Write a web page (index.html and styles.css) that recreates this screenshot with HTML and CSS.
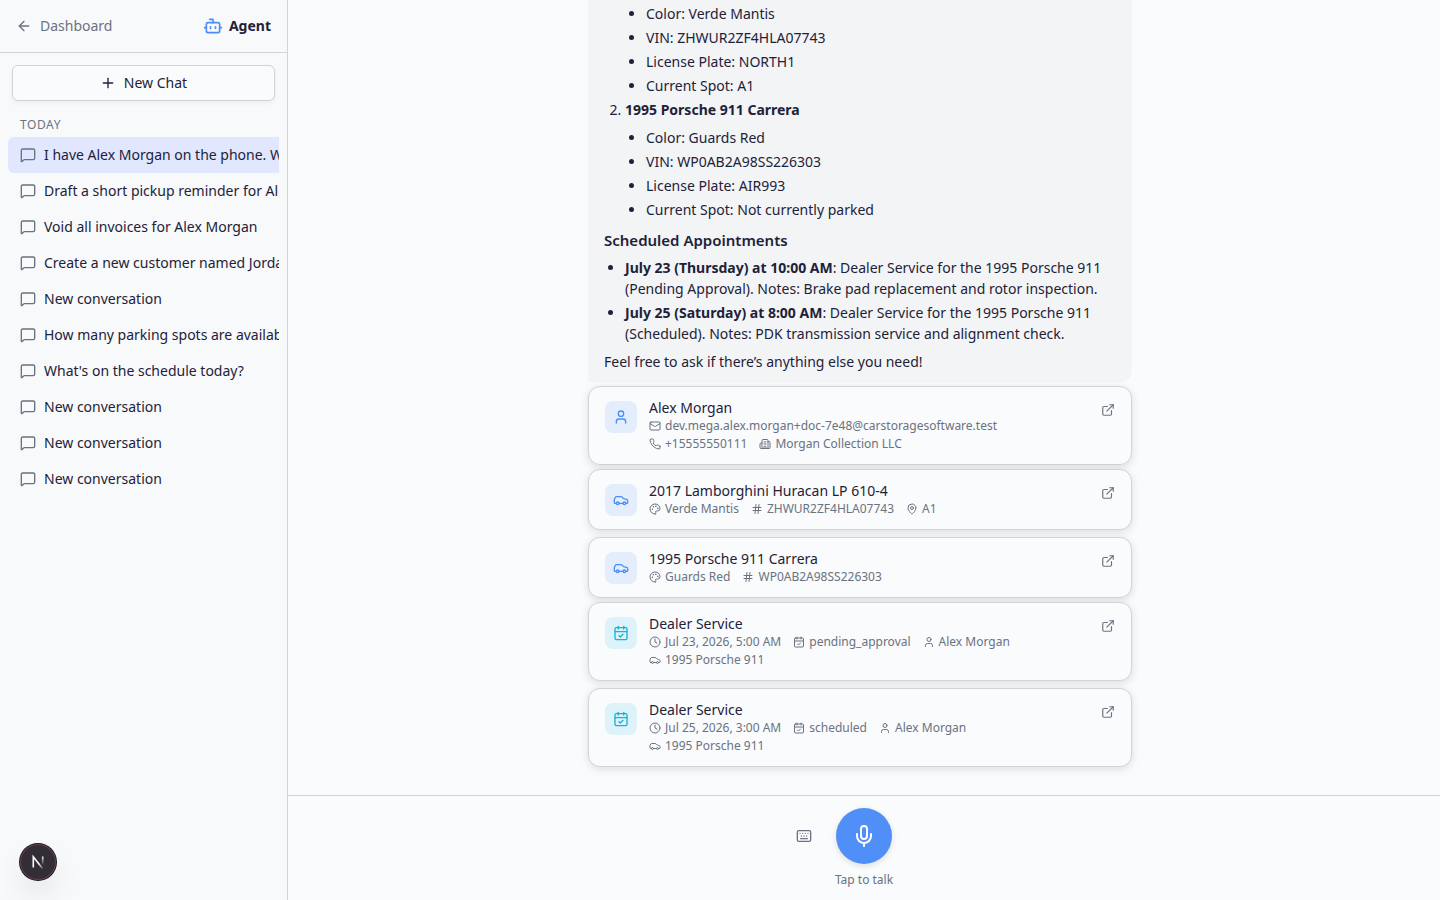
FILE: index.html
```html
<!DOCTYPE html>
<html lang="en">
<head>
    <meta charset="utf-8">
    <meta name="viewport" content="width=device-width, initial-scale=1">
    <title>Agent</title>
    <link rel="stylesheet" href="styles.css">
</head>
<body>
    <svg class="sprite" aria-hidden="true">
        <symbol id="arrow-left" viewBox="0 0 24 24"><path d="m12 19-7-7 7-7"/><path d="M19 12H5"/></symbol>
        <symbol id="bot" viewBox="0 0 24 24"><path d="M12 8V4H8"/><rect width="16" height="12" x="4" y="8" rx="2"/><path d="M2 14h2"/><path d="M20 14h2"/><path d="M15 13v2"/><path d="M9 13v2"/></symbol>
        <symbol id="plus" viewBox="0 0 24 24"><path d="M5 12h14"/><path d="M12 5v14"/></symbol>
        <symbol id="message" viewBox="0 0 24 24"><path d="M22 17a2 2 0 0 1-2 2H6.828a2 2 0 0 0-1.414.586l-2.202 2.202A.71.71 0 0 1 2 21.286V5a2 2 0 0 1 2-2h16a2 2 0 0 1 2 2z"/></symbol>
        <symbol id="user" viewBox="0 0 24 24"><path d="M19 21v-2a4 4 0 0 0-4-4H9a4 4 0 0 0-4 4v2"/><circle cx="12" cy="7" r="4"/></symbol>
        <symbol id="mail" viewBox="0 0 24 24"><path d="m22 7-8.991 5.727a2 2 0 0 1-2.009 0L2 7"/><rect x="2" y="4" width="20" height="16" rx="2"/></symbol>
        <symbol id="phone" viewBox="0 0 24 24"><path d="M22 16.92v3a2 2 0 0 1-2.18 2 19.79 19.79 0 0 1-8.63-3.07 19.5 19.5 0 0 1-6-6 19.79 19.79 0 0 1-3.07-8.67A2 2 0 0 1 4.11 2h3a2 2 0 0 1 2 1.72 12.84 12.84 0 0 0 .7 2.81 2 2 0 0 1-.45 2.11L8.09 9.91a16 16 0 0 0 6 6l1.27-1.27a2 2 0 0 1 2.11-.45 12.84 12.84 0 0 0 2.81.7A2 2 0 0 1 22 16.92z"/></symbol>
        <symbol id="building" viewBox="0 0 24 24"><path d="M10 12h4"/><path d="M10 8h4"/><path d="M14 21v-3a2 2 0 0 0-4 0v3"/><path d="M6 10H4a2 2 0 0 0-2 2v7a2 2 0 0 0 2 2h16a2 2 0 0 0 2-2V9a2 2 0 0 0-2-2h-2"/><path d="M6 21V5a2 2 0 0 1 2-2h8a2 2 0 0 1 2 2v16"/></symbol>
        <symbol id="car" viewBox="0 0 24 24"><path d="M19 17h2c.6 0 1-.4 1-1v-3c0-.9-.7-1.7-1.5-1.9C18.7 10.6 16 10 16 10s-1.3-1.4-2.2-2.3c-.5-.4-1.1-.7-1.8-.7H5c-.6 0-1.1.4-1.4.9l-1.4 2.9A3.7 3.7 0 0 0 2 12v4c0 .6.4 1 1 1h2"/><circle cx="7" cy="17" r="2"/><path d="M9 17h6"/><circle cx="17" cy="17" r="2"/></symbol>
        <symbol id="palette" viewBox="0 0 24 24"><path d="M12 22a1 1 0 0 1 0-20 10 9 0 0 1 10 9 5 5 0 0 1-5 5h-2.25a1.75 1.75 0 0 0-1.4 2.8l.3.4a1.75 1.75 0 0 1-1.4 2.8z"/><circle cx="13.5" cy="6.5" r=".5"/><circle cx="17.5" cy="10.5" r=".5"/><circle cx="6.5" cy="12.5" r=".5"/><circle cx="8.5" cy="7.5" r=".5"/></symbol>
        <symbol id="hash" viewBox="0 0 24 24"><path d="M4 9h16"/><path d="M4 15h16"/><path d="M10 3 8 21"/><path d="m16 3-2 18"/></symbol>
        <symbol id="map-pin" viewBox="0 0 24 24"><path d="M20 10c0 4.993-5.539 10.193-7.399 11.799a1 1 0 0 1-1.202 0C9.539 20.193 4 14.993 4 10a8 8 0 0 1 16 0"/><circle cx="12" cy="10" r="3"/></symbol>
        <symbol id="clock" viewBox="0 0 24 24"><circle cx="12" cy="12" r="10"/><path d="M12 6v6l4 2"/></symbol>
        <symbol id="calendar" viewBox="0 0 24 24"><path d="M8 2v4"/><path d="M16 2v4"/><rect width="18" height="18" x="3" y="4" rx="2"/><path d="M3 10h18"/><path d="m9 16 2 2 4-4"/></symbol>
        <symbol id="external" viewBox="0 0 24 24"><path d="M15 3h6v6"/><path d="M10 14 21 3"/><path d="M18 13v6a2 2 0 0 1-2 2H5a2 2 0 0 1-2-2V8a2 2 0 0 1 2-2h6"/></symbol>
        <symbol id="keyboard" viewBox="0 0 24 24"><path d="M10 8h.01"/><path d="M12 12h.01"/><path d="M14 8h.01"/><path d="M16 12h.01"/><path d="M18 8h.01"/><path d="M6 8h.01"/><path d="M7 16h10"/><path d="M8 12h.01"/><rect width="20" height="16" x="2" y="4" rx="2"/></symbol>
        <symbol id="mic" viewBox="0 0 24 24"><path d="M12 19v3"/><path d="M19 10v2a7 7 0 0 1-14 0v-2"/><rect x="9" y="2" width="6" height="13" rx="3"/></symbol>
    </svg>

    <div class="app">
        <aside class="sidebar">
            <header class="sidebar-header">
                <a class="back" href="#"><svg class="icon"><use href="#arrow-left"/></svg>Dashboard</a>
                <span class="brand"><svg class="icon icon-lg"><use href="#bot"/></svg>Agent</span>
            </header>
            <button class="new-chat" type="button"><svg class="icon"><use href="#plus"/></svg>New Chat</button>
            <nav class="history">
                <h2>TODAY</h2>
                <a class="chat active" href="#"><svg class="icon"><use href="#message"/></svg>I have Alex Morgan on the phone. What</a>
                <a class="chat" href="#"><svg class="icon"><use href="#message"/></svg>Draft a short pickup reminder for Alex</a>
                <a class="chat" href="#"><svg class="icon"><use href="#message"/></svg>Void all invoices for Alex Morgan</a>
                <a class="chat" href="#"><svg class="icon"><use href="#message"/></svg>Create a new customer named Jordan</a>
                <a class="chat" href="#"><svg class="icon"><use href="#message"/></svg>New conversation</a>
                <a class="chat" href="#"><svg class="icon"><use href="#message"/></svg>How many parking spots are available</a>
                <a class="chat" href="#"><svg class="icon"><use href="#message"/></svg>What's on the schedule today?</a>
                <a class="chat" href="#"><svg class="icon"><use href="#message"/></svg>New conversation</a>
                <a class="chat" href="#"><svg class="icon"><use href="#message"/></svg>New conversation</a>
                <a class="chat" href="#"><svg class="icon"><use href="#message"/></svg>New conversation</a>
            </nav>
        </aside>

        <main class="main">
            <section class="messages">
                <div class="thread">
                    <div class="bubble">
                        <ol>
                            <li><strong>2017 Lamborghini Huracan LP 610-4</strong>
                                <ul>
                                    <li>Color: Verde Mantis</li>
                                    <li>VIN: ZHWUR2ZF4HLA07743</li>
                                    <li>License Plate: NORTH1</li>
                                    <li>Current Spot: A1</li>
                                </ul>
                            </li>
                            <li><strong>1995 Porsche 911 Carrera</strong>
                                <ul>
                                    <li>Color: Guards Red</li>
                                    <li>VIN: WP0AB2A98SS226303</li>
                                    <li>License Plate: AIR993</li>
                                    <li>Current Spot: Not currently parked</li>
                                </ul>
                            </li>
                        </ol>
                        <h3>Scheduled Appointments</h3>
                        <ul>
                            <li><strong>July 23 (Thursday) at 10:00 AM</strong>: Dealer Service for the 1995 Porsche 911 (Pending Approval). Notes: Brake pad replacement and rotor inspection.</li>
                            <li><strong>July 25 (Saturday) at 8:00 AM</strong>: Dealer Service for the 1995 Porsche 911 (Scheduled). Notes: PDK transmission service and alignment check.</li>
                        </ul>
                        <p>Feel free to ask if there’s anything else you need!</p>
                    </div>

                    <div class="cards">
                        <a class="card" href="#">
                            <span class="tile"><svg class="icon"><use href="#user"/></svg></span>
                            <div class="info">
                                <h4>Alex Morgan</h4>
                                <div class="meta">
                                    <span><svg class="icon"><use href="#mail"/></svg>dev.mega.alex.morgan+doc-7e48@carstoragesoftware.test</span>
                                    <span><svg class="icon"><use href="#phone"/></svg>+15555550111</span>
                                    <span><svg class="icon"><use href="#building"/></svg>Morgan Collection LLC</span>
                                </div>
                            </div>
                            <svg class="icon open"><use href="#external"/></svg>
                        </a>
                    </div>

                    <div class="cards">
                        <a class="card" href="#">
                            <span class="tile"><svg class="icon"><use href="#car"/></svg></span>
                            <div class="info">
                                <h4>2017 Lamborghini Huracan LP 610-4</h4>
                                <div class="meta">
                                    <span><svg class="icon"><use href="#palette"/></svg>Verde Mantis</span>
                                    <span><svg class="icon"><use href="#hash"/></svg>ZHWUR2ZF4HLA07743</span>
                                    <span><svg class="icon"><use href="#map-pin"/></svg>A1</span>
                                </div>
                            </div>
                            <svg class="icon open"><use href="#external"/></svg>
                        </a>
                        <a class="card" href="#">
                            <span class="tile"><svg class="icon"><use href="#car"/></svg></span>
                            <div class="info">
                                <h4>1995 Porsche 911 Carrera</h4>
                                <div class="meta">
                                    <span><svg class="icon"><use href="#palette"/></svg>Guards Red</span>
                                    <span><svg class="icon"><use href="#hash"/></svg>WP0AB2A98SS226303</span>
                                </div>
                            </div>
                            <svg class="icon open"><use href="#external"/></svg>
                        </a>
                    </div>

                    <div class="cards">
                        <a class="card" href="#">
                            <span class="tile tile-service"><svg class="icon"><use href="#calendar"/></svg></span>
                            <div class="info">
                                <h4>Dealer Service</h4>
                                <div class="meta">
                                    <span><svg class="icon"><use href="#clock"/></svg>Jul 23, 2026, 5:00 AM</span>
                                    <span><svg class="icon"><use href="#calendar"/></svg>pending_approval</span>
                                    <span><svg class="icon"><use href="#user"/></svg>Alex Morgan</span>
                                    <span><svg class="icon"><use href="#car"/></svg>1995 Porsche 911</span>
                                </div>
                            </div>
                            <svg class="icon open"><use href="#external"/></svg>
                        </a>
                        <a class="card" href="#">
                            <span class="tile tile-service"><svg class="icon"><use href="#calendar"/></svg></span>
                            <div class="info">
                                <h4>Dealer Service</h4>
                                <div class="meta">
                                    <span><svg class="icon"><use href="#clock"/></svg>Jul 25, 2026, 3:00 AM</span>
                                    <span><svg class="icon"><use href="#calendar"/></svg>scheduled</span>
                                    <span><svg class="icon"><use href="#user"/></svg>Alex Morgan</span>
                                    <span><svg class="icon"><use href="#car"/></svg>1995 Porsche 911</span>
                                </div>
                            </div>
                            <svg class="icon open"><use href="#external"/></svg>
                        </a>
                    </div>
                </div>
            </section>

            <footer class="talk">
                <div class="talk-row">
                    <button class="keyboard" type="button" aria-label="Keyboard"><svg class="icon"><use href="#keyboard"/></svg></button>
                    <button class="mic" id="mic-button" type="button" aria-labelledby="mic-label"><svg class="icon icon-xl"><use href="#mic"/></svg></button>
                </div>
                <label id="mic-label" for="mic-button">Tap to talk</label>
            </footer>
        </main>
    </div>

    <button class="dev-badge" type="button" aria-label="Dev tools">
        <svg viewBox="0 0 36 36" width="36" height="36" fill="none">
            <defs>
                <linearGradient id="fade-diagonal" x1="20" y1="19" x2="24" y2="25" gradientUnits="userSpaceOnUse"><stop stop-color="#fff"/><stop offset="1" stop-color="#fff" stop-opacity="0"/></linearGradient>
                <linearGradient id="fade-stem" x1="23" y1="12" x2="23" y2="21" gradientUnits="userSpaceOnUse"><stop stop-color="#fff"/><stop offset="1" stop-color="#fff" stop-opacity="0"/></linearGradient>
            </defs>
            <path d="M13.300 23.500V12.800L22.500 24.500" stroke="url(#fade-diagonal)" stroke-width="1.600"/>
            <path d="M22.700 12.500V22" stroke="url(#fade-stem)" stroke-width="1.600"/>
        </svg>
    </button>
</body>
</html>
```

FILE: styles.css
```css
*{
    box-sizing: border-box;
}
body{
    margin: 0;
    font-family: "Noto Sans", sans-serif;
    font-size: 14px;
    line-height: 20px;
    color: #1e2238;
    background: #f9fbfd;
}
h2, h3, h4, p, ol, ul{
    margin: 0;
}
a{
    color: inherit;
    text-decoration: none;
}
button{
    font: inherit;
    color: inherit;
    padding: 0;
    border: 0;
    background: none;
    cursor: pointer;
}
.sprite{
    position: absolute;
    width: 0;
    height: 0;
}
.icon{
    flex: none;
    width: 16px;
    height: 16px;
    fill: none;
    stroke: currentColor;
    stroke-width: 2;
    stroke-linecap: round;
    stroke-linejoin: round;
}
.icon-lg{
    width: 20px;
    height: 20px;
}
.icon-xl{
    width: 24px;
    height: 24px;
}
.app{
    display: flex;
    height: 100vh;
    overflow: hidden;
}

/* sidebar */
.sidebar{
    flex: none;
    display: flex;
    flex-direction: column;
    width: 288px;
    background: #f7f9fb;
    border-right: 1px solid #d1d3db;
}
.sidebar-header{
    display: flex;
    align-items: center;
    justify-content: space-between;
    padding: 16px;
    border-bottom: 1px solid #d1d3db;
}
.back{
    display: flex;
    align-items: center;
    gap: 8px;
    color: #6b7280;
}
.brand{
    display: flex;
    align-items: center;
    gap: 6px;
    font-weight: 700;
}
.brand .icon{
    color: #4b8ef8;
}
.new-chat{
    display: flex;
    align-items: center;
    justify-content: center;
    gap: 8px;
    height: 36px;
    margin: 12px;
    border: 1px solid #d1d3db;
    border-radius: 6px;
    background: #f9fbfd;
    box-shadow: 0 2px 4px rgba(0, 0, 0, 0.05);
}
.history{
    margin: 0 8px;
    overflow: hidden;
}
.history h2{
    padding: 4px 12px;
    font-size: 12px;
    line-height: 16px;
    font-weight: 400;
    letter-spacing: 0.05em;
    color: #6b7280;
}
.chat{
    display: flex;
    align-items: center;
    gap: 8px;
    width: max-content;
    min-width: 100%;
    padding: 8px 12px;
    border-radius: 6px;
    white-space: nowrap;
}
.chat .icon{
    color: #6b7280;
}
.chat.active{
    background: #e0e7ff;
}

/* conversation */
.main{
    flex: 1;
    display: flex;
    flex-direction: column;
    min-width: 0;
}
.messages{
    flex: 1;
    display: flex;
    flex-direction: column;
    justify-content: flex-end;
    min-height: 0;
    padding: 0 24px 28px 16px;
    overflow: hidden;
}
.thread{
    display: flex;
    flex-direction: column;
    gap: 4px;
    width: 100%;
    max-width: 544px;
    margin: 0 auto;
}
.bubble{
    padding: 10px 16px;
    border-radius: 12px 12px 12px 4px;
    background: #f2f4f6;
    line-height: 21px;
}
.bubble ol, .bubble ul{
    padding-left: 21px;
}
.bubble ul{
    list-style: disc;
}
.bubble li + li{
    margin-top: 3px;
}
.bubble li > ul{
    margin-top: 7px;
}
.bubble strong{
    font-weight: 700;
}
.bubble h3{
    margin: 10px 0 6px;
    font-size: 15px;
    font-weight: 600;
}
.bubble p{
    margin-top: 7px;
}
.cards{
    display: flex;
    flex-direction: column;
    gap: 7px;
}
.card{
    display: flex;
    align-items: flex-start;
    gap: 12px;
    padding: 14px 16px 12px;
    border: 1px solid #d1d3db;
    border-radius: 12px;
    background: #f9fbfd;
    box-shadow: 0 2px 8px rgba(0, 0, 0, 0.12);
}
.tile{
    display: flex;
    align-items: center;
    justify-content: center;
    width: 32px;
    height: 32px;
    border-radius: 8px;
    color: #4b8ef8;
    background: #e3edfc;
}
.tile-service{
    color: #14b4dc;
    background: #def3f9;
}
.info{
    flex: 1;
    min-width: 0;
}
.info h4{
    font-size: 14px;
    line-height: 14px;
    font-weight: 400;
}
.meta{
    display: flex;
    flex-wrap: wrap;
    gap: 2px 12px;
    margin-top: 3px;
    font-size: 12px;
    line-height: 16px;
    color: #6b7280;
}
.meta span{
    display: flex;
    align-items: center;
    gap: 4px;
}
.meta .icon{
    width: 12px;
    height: 12px;
}
.open{
    width: 14px;
    height: 14px;
    margin-top: 2px;
    color: #6b7280;
}

/* voice bar */
.talk{
    display: flex;
    flex-direction: column;
    align-items: center;
    gap: 8px;
    padding: 12px;
    border-top: 1px solid #d1d3db;
    color: #6b7280;
    font-size: 12px;
    line-height: 16px;
}
.talk-row{
    display: grid;
    grid-template-columns: 1fr auto 1fr;
    align-items: center;
    gap: 16px;
    width: 100%;
}
.keyboard{
    display: flex;
    align-items: center;
    justify-content: center;
    justify-self: end;
    width: 32px;
    height: 32px;
}
.mic{
    display: flex;
    align-items: center;
    justify-content: center;
    width: 56px;
    height: 56px;
    border-radius: 50%;
    color: #fff;
    background: #4f8ff7;
    box-shadow: 0 2px 6px rgba(0, 0, 0, 0.12);
}
.dev-badge{
    position: fixed;
    left: 20px;
    bottom: 20px;
    width: 36px;
    height: 36px;
    border-radius: 50%;
    background: #332e36;
    box-shadow: 0 0 0 1px #1b1626, inset 0 0 0 1px #63404e, 0 16px 32px -8px rgba(0, 0, 0, 0.24);
}
```
